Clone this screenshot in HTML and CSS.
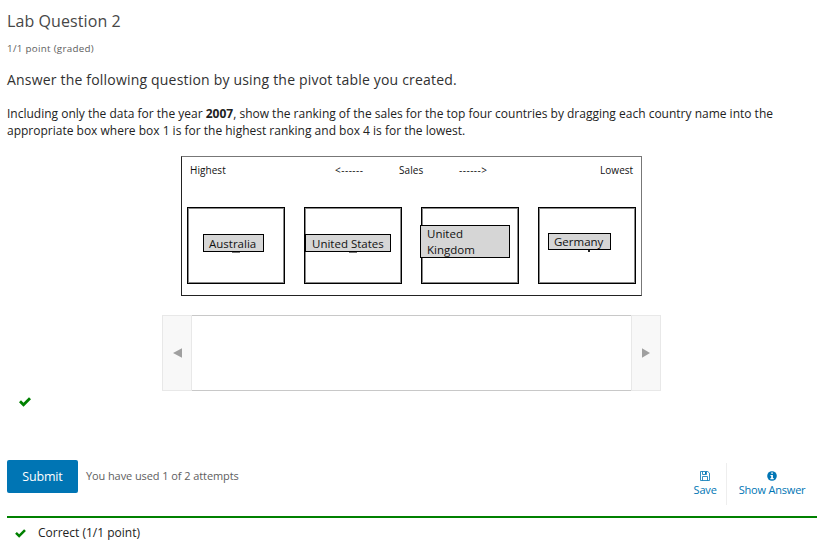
FILE: index.html
```html
<!DOCTYPE html>
<html lang="en">
<head>
<meta charset="utf-8">
<title>Lab Question 2</title>
<link rel="stylesheet" href="styles.css">
</head>
<body>
<main class="problem">
  <h3 class="title"><span>Lab Question 2</span></h3>
  <div class="progress"><span>1/1 point (graded)</span></div>
  <p class="lead"><span>Answer the following question by using the pivot table you created.</span></p>
  <p class="prompt"><span class="line1">Including only the data for the year <b>2007</b>, show the ranking of the sales for the top four countries by dragging each country name into the</span><br><span class="line2">appropriate box where box 1 is for the highest ranking and box 4 is for the lowest.</span></p>
  <section class="board">
    <div class="scale"><span>Highest</span><span class="dashes">&lt;------</span><span>Sales</span><span class="dashes">------&gt;</span><span>Lowest</span></div>
    <div class="targets">
      <div class="target"><i class="peek peek-1"></i><span class="chip australia">Australia</span></div>
      <div class="target"><i class="peek peek-2"></i><span class="chip states">United States</span></div>
      <div class="target"><span class="chip kingdom">United<br>Kingdom</span></div>
      <div class="target"><i class="peek peek-4"></i><span class="chip germany">Germany</span></div>
    </div>
  </section>
  <div class="slider">
    <div class="arrow"><svg width="9" height="10" viewBox="0 0 9 10"><path d="M0 5 9 .3v9.4z"/></svg></div>
    <div class="tray"></div>
    <div class="arrow right"><svg width="8" height="10" viewBox="0 0 8 10"><path d="M8 5 0 .3v9.4z"/></svg></div>
  </div>
  <div class="status"><svg class="check" width="12" height="10" viewBox="0 0 12 10"><path d="M0 5.2 2 3.2 4.5 5.7 10 .2l2 2L4.5 9.7z"/></svg></div>
  <div class="actions">
    <button class="submit"><span>Submit</span></button>
    <span class="attempts">You have used 1 of 2 attempts</span>
    <a class="action save"><svg width="10" height="10" viewBox="0 0 10 10"><path d="M.5.5h7.3l1.7 1.7v7.3h-9zM2.5.5v3h4v-3M2.5 9.5v-4h5v4" fill="none" stroke="#0075b4" stroke-width=".8"/><path d="M5 1h1v2H5z" fill="#0075b4"/></svg><span>Save</span></a>
    <a class="action answer"><svg width="10" height="10" viewBox="0 0 10 10"><circle cx="5" cy="5" r="4.8" fill="#0075b4"/><path d="M4.2 1.5h1.7v1.3H4.2zM3.5 3.9h2.4v3.2h.8v1.2H3.4V7.1h.8v-2h-.7z" fill="#fff"/></svg><span>Show Answer</span></a>
  </div>
  <div class="notice"><svg class="check" width="11" height="9" viewBox="0 0 12 10"><path d="M0 5.2 2 3.2 4.5 5.7 10 .2l2 2L4.5 9.7z"/></svg><span>Correct (1/1 point)</span></div>
</main>
</body>
</html>
```
FILE: styles.css
```css
* { box-sizing: border-box; }
body { margin: 0; background: #fff; color: #222; font: 12px/17px "Open Sans", sans-serif; }
.problem { width: 827px; height: 555px; padding: 9px 10px 0 7px; overflow: hidden; }
h3, p { margin: 0; font-weight: 400; }
span { white-space: nowrap; }
.title { font-size: 16px; line-height: 24px; letter-spacing: .09px; color: #474747; }
.progress { margin-top: 7px; font-size: 9.8px; line-height: 17px; letter-spacing: .29px; color: #5e5e5e; }
.lead { margin-top: 11px; font-size: 14px; line-height: 24px; letter-spacing: .19px; color: #313131; }
.prompt { margin-top: 13px; font-size: 12px; line-height: 17px; color: #222; }
.board { width: 461px; height: 140px; margin: 17px 0 0 174px; border: 1px solid #222; border-top-color: #777; border-right-color: #777; }
.scale { display: grid; grid-template-columns: 145px 64px 60px 141px auto; padding: 5px 0 0 8px; height: 50px; font-size: 10px; line-height: 17px; color: #111; }
.scale span { letter-spacing: .05px; }
.scale .dashes { letter-spacing: .5px; }
.targets { display: flex; gap: 19px; padding-left: 5px; }
.target { position: relative; width: 98px; height: 77px; border: 1px solid #000; box-shadow: inset 1px 1px #888, inset -1px -1px #888; }
.chip { position: absolute; border: 1px solid #000; background: #d6d6d6; color: #111; font-size: 11.5px; line-height: 16px; padding-left: 6px; }
.australia { left: 15px; top: 26px; width: 61px; height: 18px; padding: 1px 0 0 5px; }
.states { left: 0; top: 26px; width: 86px; height: 18px; padding-top: 1px; }
.kingdom { left: -2px; top: 17px; width: 90px; height: 33px; }
.germany { left: 9px; top: 25px; width: 63px; height: 17px; padding-left: 5px; }
.peek { position: absolute; top: 44px; left: 44px; width: 8px; height: 1px; background: #777; }
.peek-4 { top: 42px; left: 49px; width: 2px; height: 2px; background: #222; }
.slider { display: flex; width: 499px; height: 76px; margin: 19px 0 0 155px; }
.arrow { display: flex; align-items: center; width: 30px; padding-left: 10px; border: 1px solid #e8e8e8; background: #f8f8f8; }
.arrow path { fill: #a0a0a0; }
.tray { flex: 1; border: solid #c8c8c8; border-width: 1px 0; }
.status { height: 69px; padding: 6px 0 0 12px; }
.check { display: block; fill: #008100; }
.actions { display: flex; height: 56px; }
.submit { width: 71px; height: 33px; padding: 0; border: 0; border-radius: 2px; background: #0075b4; color: #fff; font: 12.5px/33px "Open Sans", sans-serif; }
.submit span { letter-spacing: -.15px; }
.attempts { margin-left: 8px; width: 599px; font-size: 11px; line-height: 32px; letter-spacing: -.08px; color: #5e5e5e; }
.action { display: flex; flex-direction: column; align-items: center; height: 42px; margin-top: 3px; padding-top: 8px; color: #0075b4; font-size: 11px; line-height: 17px; letter-spacing: -.2px; }
.save { width: 42px; letter-spacing: -.15px; }
.answer { width: 91px; border-left: 1px solid #eee; }
.notice { display: flex; align-items: center; height: 36px; border-top: 2px solid #008100; padding: 0 0 4px 8px; font-size: 12px; color: #222; }
.notice .check { margin-top: 1px; }
.notice span { margin: -1px 0 0 12px; }
```
